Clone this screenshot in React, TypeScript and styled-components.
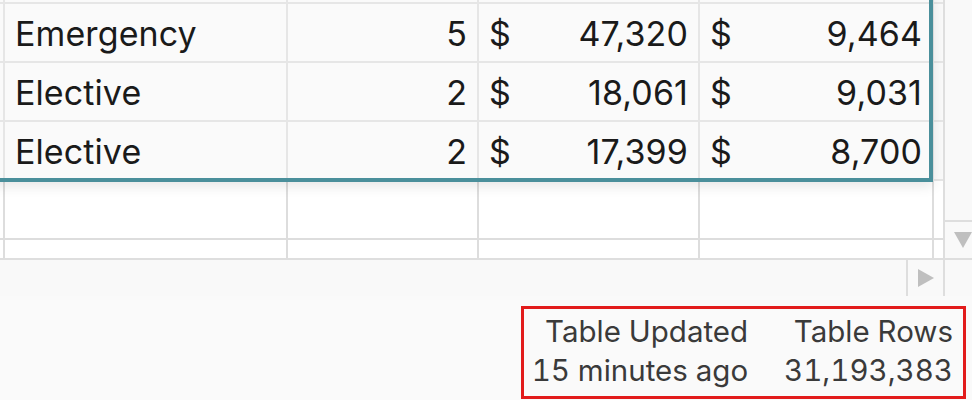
import React from "react";
import styled, { createGlobalStyle } from "styled-components";

type SheetRow = {
  type: string;
  count: string;
  total: string;
  average: string;
};

const rows: SheetRow[] = [
  { type: "", count: "", total: "", average: "" },
  { type: "Emergency", count: "5", total: "47,320", average: "9,464" },
  { type: "Elective", count: "2", total: "18,061", average: "9,031" },
  { type: "Elective", count: "2", total: "17,399", average: "8,700" },
];

const blankRows = 2;

const GlobalStyle = createGlobalStyle`
  html, body {
    margin: 0;
    padding: 0;
    overflow: hidden;
    background: #fafafa;
  }
  body {
    font-family: Inter, "Noto Sans", sans-serif;
  }
`;

const Frame = styled.div`
  width: 980px;
  height: 400px;
  display: flex;
  flex-direction: column;
  background: #fafafa;
`;

const GridArea = styled.div`
  display: grid;
  grid-template-columns: 943px 37px;
  grid-template-rows: 258px 38px;
  box-sizing: border-box;
  height: 296px;
  border-bottom: 2px solid #dedede;
`;

const Sheet = styled.div`
  position: relative;
  overflow: hidden;
  background: #ffffff;
`;

const Rows = styled.div`
  margin-top: -55px;
`;

const Row = styled.div<{ $selected?: boolean }>`
  display: grid;
  grid-template-columns: 5px 283px 191px 221px 234px 9px;
  box-sizing: border-box;
  height: 59px;
  background: ${(p) => (p.$selected ? "#fafafa" : "#ffffff")};
  border-bottom: 2px solid ${(p) => (p.$selected ? "#e6e6e6" : "#dddddd")};
`;

const Cell = styled.div<{ $align?: "left" | "right" | "split"; $selected?: boolean; $last?: boolean }>`
  display: flex;
  align-items: center;
  justify-content: ${(p) =>
    p.$align === "right" ? "flex-end" : p.$align === "split" ? "space-between" : "flex-start"};
  box-sizing: border-box;
  padding: 2px 10px 0 10px;
  min-width: 0;
  overflow: hidden;
  white-space: nowrap;
  border-right: ${(p) => (p.$last ? "none" : `2px solid ${p.$selected ? "#e6e6e6" : "#dddddd"}`)};
  font-size: 34px;
  letter-spacing: 0.1px;
  color: #1a1a1a;
`;

const Stub = styled(Cell)`
  padding: 0;
`;

const Selection = styled.div`
  position: absolute;
  left: -10px;
  top: -10px;
  width: 943px;
  height: 192px;
  box-sizing: border-box;
  border: 4px solid #4a8f9b;
  box-shadow: 0 4px 12px rgba(0, 0, 0, 0.1);
  pointer-events: none;
`;

const VScroll = styled.div`
  display: flex;
  flex-direction: column;
  justify-content: flex-end;
  background: #f9f9f9;
  border-left: 2px solid #dedede;
`;

const HScroll = styled.div`
  display: flex;
  justify-content: flex-end;
  background: #f9f9f9;
  border-top: 2px solid #dedede;
`;

const Corner = styled.div`
  background: #f9f9f9;
  border-left: 2px solid #dedede;
  border-top: 2px solid #dedede;
`;

const ArrowButton = styled.div<{ $side: "top" | "left" }>`
  display: flex;
  align-items: center;
  justify-content: center;
  box-sizing: border-box;
  ${(p) =>
    p.$side === "top"
      ? "height: 38px; border-top: 2px solid #dedede;"
      : "width: 37px; border-left: 2px solid #dedede;"}
  color: #bfbfbf;
`;

const Footer = styled.div`
  display: flex;
  justify-content: flex-end;
  padding: 10px 14px 0 0;
`;

const StatsBox = styled.div`
  display: flex;
  gap: 36px;
  border: 3px solid #e21b1b;
  padding: 3px 10px 6px 8px;
`;

const Stat = styled.div`
  display: flex;
  flex-direction: column;
  align-items: flex-end;
  font-size: 29.5px;
  line-height: 39px;
  font-variant-numeric: tabular-nums;
  color: #3a3a3a;
  white-space: nowrap;
`;

const DownArrow = () => (
  <svg width="18" height="18" viewBox="0 0 18 18">
    <polygon points="0,1 18,1 9,17" fill="currentColor" />
  </svg>
);

const RightArrow = () => (
  <svg width="18" height="18" viewBox="0 0 18 18">
    <polygon points="1,0 17,9 1,18" fill="currentColor" />
  </svg>
);

const MoneyCell: React.FC<{ value: string; selected?: boolean }> = ({ value, selected }) => (
  <Cell $align="split" $selected={selected}>
    {value && <span>$</span>}
    <span>{value}</span>
  </Cell>
);

export default function App() {
  return (
    <Frame>
      <GlobalStyle />
      <GridArea>
        <Sheet>
          <Rows>
            {rows.map((r, i) => (
              <Row key={i} $selected>
                <Stub $selected />
                <Cell $selected>{r.type}</Cell>
                <Cell $align="right" $selected>
                  {r.count}
                </Cell>
                <MoneyCell value={r.total} selected />
                <MoneyCell value={r.average} selected />
                <Stub $selected $last />
              </Row>
            ))}
            {Array.from({ length: blankRows }).map((_, i) => (
              <Row key={`blank-${i}`}>
                <Stub />
                <Cell />
                <Cell />
                <Cell />
                <Cell />
                <Stub $last />
              </Row>
            ))}
          </Rows>
          <Selection />
        </Sheet>
        <VScroll>
          <ArrowButton $side="top">
            <DownArrow />
          </ArrowButton>
        </VScroll>
        <HScroll>
          <ArrowButton $side="left">
            <RightArrow />
          </ArrowButton>
        </HScroll>
        <Corner />
      </GridArea>
      <Footer>
        <StatsBox>
          <Stat>
            <span>Table Updated</span>
            <span>15 minutes ago</span>
          </Stat>
          <Stat>
            <span>Table Rows</span>
            <span>31,193,383</span>
          </Stat>
        </StatsBox>
      </Footer>
    </Frame>
  );
}
